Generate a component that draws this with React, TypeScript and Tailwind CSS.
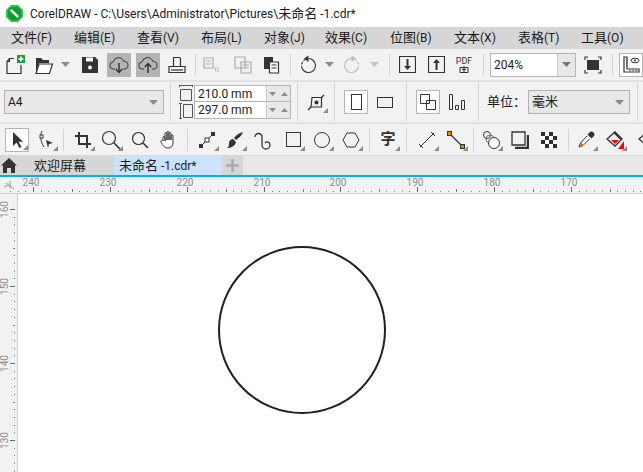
import type { ReactNode } from "react";

const FONT = "font-['Roboto','Noto_Sans_CJK_SC',sans-serif]";
const menus = [
  { cn: "文件", key: "(F)", w: "w-[63px]" },
  { cn: "编辑", key: "(E)", w: "w-[63px]" },
  { cn: "查看", key: "(V)", w: "w-[64px]" },
  { cn: "布局", key: "(L)", w: "w-[63px]" },
  { cn: "对象", key: "(J)", w: "w-[61px]" },
  { cn: "效果", key: "(C)", w: "w-[65px]" },
  { cn: "位图", key: "(B)", w: "w-[64px]" },
  { cn: "文本", key: "(X)", w: "w-[64px]" },
  { cn: "表格", key: "(T)", w: "w-[63px]" },
  { cn: "工具", key: "(O)", w: "w-[60px]" },
];

const Cn = ({ children }: { children: ReactNode }) => <span className="text-[13px]">{children}</span>;

const Ico = ({ children, w = 20, h = 20 }: { children: ReactNode; w?: number; h?: number }) => (
  <svg width={w} height={h} viewBox={`0 0 ${w} ${h}`} fill="none" stroke="#333" strokeWidth="1.2" className="block shrink-0">
    {children}
  </svg>
);

const Sep = ({ ml, h = "h-[22px]" }: { ml: string; h?: string }) => <div className={`w-px shrink-0 bg-[#d2d2d2] ${h} ${ml}`} />;

const Caret = ({ color = "#777" }: { color?: string }) => (
  <svg width="9" height="5" viewBox="0 0 9 5" className="block shrink-0">
    <path d="M0 0h9L4.500 5z" fill={color} />
  </svg>
);

// tool with the small flyout triangle in its lower right corner
const Tool = ({ ml, children, flyout = true, active = false }: { ml: string; children: ReactNode; flyout?: boolean; active?: boolean }) => (
  <div className={`relative flex h-[24px] w-[24px] shrink-0 items-center justify-center ${ml} ${active ? "border border-[#b5b5b5] bg-white" : ""}`}>
    {children}
    {flyout && (
      <svg width="5" height="5" viewBox="0 0 5 5" className="absolute bottom-px right-0">
        <path d="M5 0v5H0z" fill="#8a8a8a" />
      </svg>
    )}
  </div>
);

const Btn = ({ ml, children, on = false }: { ml: string; children: ReactNode; on?: boolean }) => (
  <div className={`flex h-[24px] w-[24px] shrink-0 items-center justify-center ${ml} ${on ? "bg-[#b4b4b4]" : ""}`}>{children}</div>
);

const Cloud = ({ up }: { up?: boolean }) => (
  <Ico>
    <path d="M6 14H4.500a3.500 3.500 0 0 1-.4-7 5.500 5.500 0 0 1 10.600-.6 3.800 3.800 0 0 1 .8 7.600H14" strokeWidth="1" />
    {up ? <path d="M10 18V9M6.800 12 10 8.500l3.200 3.500" strokeWidth="1.500" /> : <path d="M10 8v9M6.800 14l3.200 3.500 3.200-3.500" strokeWidth="1.500" />}
  </Ico>
);

const Spin = () => (
  <div className="flex h-full w-[24px] items-center justify-center gap-[5px] border-l border-[#c8c8c8] bg-[#e8e8e8]">
    <svg width="7" height="4" viewBox="0 0 7 4"><path d="M0 0h7L3.500 4z" fill="#8c8c8c" /></svg>
    <svg width="7" height="4" viewBox="0 0 7 4"><path d="M0 4h7L3.500 0z" fill="#8c8c8c" /></svg>
  </div>
);

const TitleBar = () => (
  <div className="flex h-[27px] items-center bg-white pl-[6px]">
    <svg width="17" height="17" viewBox="0 0 17 17" className="block shrink-0">
      <path d="M5 0h7l5 5v7l-5 5H5l-5-5V5z" fill="#2fc24a" />
      <path d="M5.500 2h6l3.500 3.500v6L11.500 15h-6L2 11.500v-6z" fill="#0f9a32" />
      <path d="M4.800 4.800l7.400 7.400" stroke="#f2f7ea" strokeWidth="2.600" />
    </svg>
    <span className="ml-[7px] whitespace-nowrap text-[12px] text-[#1a1a1a]">
      CorelDRAW - C:\Users\Administrator\Pictures\<Cn>未命名</Cn> -1.cdr*
    </span>
  </div>
);

const MenuBar = () => (
  <div className="flex h-[22px] items-center bg-[#d6d6d6] pl-[11px] text-[12px] text-[#1a1a1a]">
    {menus.map((m) => (
      <span key={m.cn} className={`${m.w} shrink-0 whitespace-nowrap`}>
        <Cn>{m.cn}</Cn>
        {m.key}
      </span>
    ))}
  </div>
);

const Row1 = () => (
  <div className="flex h-[31px] items-center overflow-hidden bg-[#f2f2f2]">
    <Btn ml="ml-[4px]">
      <Ico>
        <path d="M8 3.500H3.500L1 6.500v12h14V10" />
        <path d="M3.500 3.500v3H1" />
        <rect x="11" y="0" width="8" height="8" fill="#1c9a3e" stroke="none" />
        <path d="M15 1.500v5M12.500 4h5" stroke="#fff" strokeWidth="1.500" />
      </Ico>
    </Btn>
    <Btn ml="ml-[4px]">
      <Ico>
        <path d="M2 18V3h5l2 2h6v3H5z" fill="#333" stroke="none" />
        <path d="M2 18.500 5 9h13.500l-3 9.500z" fill="#fff" />
      </Ico>
    </Btn>
    <div className="flex w-[18px] shrink-0 justify-center"><Caret color="#8a8a8a" /></div>
    <Btn ml="ml-[4px]">
      <Ico>
        <path d="M2 2h13l3 3v13H2z" fill="#333" stroke="none" />
        <rect x="6" y="2.500" width="7" height="4" fill="#fff" stroke="none" />
        <circle cx="10" cy="12.500" r="2" fill="#fff" stroke="none" />
      </Ico>
    </Btn>
    <Btn ml="ml-[5px]" on><Cloud /></Btn>
    <Btn ml="ml-[5px]" on><Cloud up /></Btn>
    <Btn ml="ml-[5px]">
      <Ico>
        <path d="M6.500 11V2.500h6l1 1V11" />
        <path d="M2 11.500h16v6H2z" />
        <path d="M4 15h12" />
      </Ico>
    </Btn>
    <Sep ml="ml-[6px]" />
    <Btn ml="ml-[3px]">
      <Ico>
        <g stroke="#aaa">
          <path d="M3 3h9v10H3zM5 6h5M5 9h5" />
          <path d="M14 13h3v3h-3z" strokeDasharray="1.500 1" />
        </g>
      </Ico>
    </Btn>
    <Btn ml="ml-[8px]">
      <Ico>
        <g stroke="#aaa">
          <path d="M2 2h10v11H2zM8 7h10v11H8zM10 10h6M10 13h6" />
        </g>
      </Ico>
    </Btn>
    <Btn ml="ml-[4px]">
      <Ico>
        <path d="M3 2h9v12H3z" fill="#333" stroke="none" />
        <path d="M8.500 7h9v11h-9zM10.500 10h5M10.500 13h5" fill="#fff" />
      </Ico>
    </Btn>
    <Sep ml="ml-[7px]" />
    <Btn ml="ml-[5px]">
      <Ico>
        <path d="M10.500 3.500a7 7 0 1 1-7 7.500" strokeWidth="1.100" />
        <path d="M3.500 9.500 4.500 7M5.500 5.500 7 4.500" strokeWidth="1.100" />
        <path d="M10.500 .5 6 3.500l4.500 3.500z" fill="#333" stroke="none" />
      </Ico>
    </Btn>
    <div className="flex w-[18px] shrink-0 justify-center"><Caret color="#8a8a8a" /></div>
    <Btn ml="ml-[2px]">
      <Ico>
        <path d="M9.500 3.500a7 7 0 1 0 7 7.500" stroke="#bbb" strokeWidth="1.100" />
        <path d="M16.500 9.500 15.500 7M14.500 5.500 13 4.500" stroke="#bbb" strokeWidth="1.100" />
        <path d="M9.500 .5 14 3.500 9.500 7z" fill="#bbb" stroke="none" />
      </Ico>
    </Btn>
    <div className="ml-[1px] flex w-[18px] shrink-0 justify-center"><Caret color="#c4c4c4" /></div>
    <Sep ml="ml-[6px]" />
    <Btn ml="ml-[5px]">
      <Ico w={17} h={17}>
        <path d="M.5.5h16v16H.5z" />
        <path d="M8.500 3v8" strokeWidth="2" />
        <path d="M5 10h7l-3.500 4z" fill="#333" stroke="none" />
      </Ico>
    </Btn>
    <Btn ml="ml-[5px]">
      <Ico w={17} h={17}>
        <path d="M.5.5h16v16H.5z" />
        <path d="M8.500 6v8" strokeWidth="2" />
        <path d="M5 7h7L8.500 3z" fill="#333" stroke="none" />
      </Ico>
    </Btn>
    <div className="ml-[4px] flex w-[24px] shrink-0 flex-col items-center">
      <span className="text-[9px] leading-[10px] text-[#333]">PDF</span>
      <svg width="10" height="7" viewBox="0 0 10 7" fill="none" stroke="#333"><path d="M1 1.500h8v5H1zM5 0v6.500M3 3.500h4" /></svg>
    </div>
    <Sep ml="ml-[7px]" />
    <div className="ml-[6px] flex h-[24px] w-[86px] shrink-0 items-center border border-[#b5b5b5] bg-white pl-[3px] text-[12px] text-[#1a1a1a]">
      <span className="grow">204%</span>
      <div className="flex h-full w-[18px] items-center justify-center border-l border-[#c8c8c8] bg-[#e8e8e8]"><Caret color="#777" /></div>
    </div>
    <Btn ml="ml-[5px]">
      <Ico w={18} h={18}>
        <rect x="3" y="4" width="12" height="10" fill="#333" stroke="none" />
        <path d="M1 4V1h3M14 1h3v3M1 14v3h3M14 17h3v-3" />
      </Ico>
    </Btn>
    <Sep ml="ml-[7px]" />
    <div className="ml-[6px] flex h-[24px] w-[24px] shrink-0 items-center justify-center border border-[#b5b5b5] bg-white">
      <Ico>
        <path d="M3 2h3v12h12v3H3z" />
        <path d="M5 5h1M5 8h1M5 11h1M9 15v1M12 15v1M15 15v1" />
        <ellipse cx="14" cy="5.500" rx="4" ry="2.300" strokeWidth="1" />
        <circle cx="14" cy="5.500" r="1" fill="#333" stroke="none" />
      </Ico>
    </div>
  </div>
);

const Row2 = () => (
  <div className="flex h-[44px] items-center overflow-hidden border-y-2 border-[#e2e2e2] bg-[#f2f2f2]">
    <div className="ml-[4px] flex h-[24px] w-[160px] shrink-0 items-center justify-between border border-[#b0b0b0] bg-[#e8e8e8] pl-[3px] pr-[5px] text-[12px] text-[#1a1a1a]">
      <span>A4</span>
      <Caret color="#8a8a8a" />
    </div>
    <Sep ml="ml-[6px]" h="h-[38px]" />
    <div className="ml-[8px] flex w-[14px] shrink-0 flex-col gap-[2px]">
      <svg width="14" height="16" viewBox="0 0 14 16" fill="none" stroke="#555"><path d="M0 .5h14M.5 0v2M13.500 0v2M1.500 4.500h11v11h-11z" /></svg>
      <svg width="14" height="16" viewBox="0 0 14 16" fill="none" stroke="#555"><path d="M1.500 0v16M0 .5h3M0 15.500h3M4.500 1.500h9v13h-9z" /></svg>
    </div>
    <div className="ml-[1px] flex h-[34px] w-[97px] shrink-0 flex-col border border-[#b5b5b5] bg-white text-[12px] leading-none text-[#1a1a1a]">
      <div className="flex h-[16px] items-center justify-between border-b border-[#b5b5b5]"><span className="pl-[3px]">210.0 mm</span><Spin /></div>
      <div className="flex h-[16px] grow items-center justify-between"><span className="pl-[3px]">297.0 mm</span><Spin /></div>
    </div>
    <Sep ml="ml-[6px]" h="h-[38px]" />
    <Tool ml="ml-[6px]">
      <Ico w={18} h={18}>
        <path d="M5 4.500h9.500V14H4z" />
        <circle cx="9.500" cy="9.500" r="2" fill="#333" stroke="none" />
        <path d="M1 17l3-3M14.500 4.500 17 2" strokeWidth="1.400" />
      </Ico>
    </Tool>
    <Sep ml="ml-[6px]" h="h-[38px]" />
    <div className="ml-[9px] flex h-[24px] w-[24px] shrink-0 items-center justify-center border border-[#b5b5b5] bg-white">
      <div className="h-[16px] w-[11px] border border-[#333]" />
    </div>
    <div className="ml-[9px] flex h-[24px] w-[16px] shrink-0 items-center justify-center">
      <div className="h-[11px] w-[16px] shrink-0 border border-[#333]" />
    </div>
    <Sep ml="ml-[13px]" h="h-[38px]" />
    <div className="ml-[9px] flex h-[24px] w-[24px] shrink-0 items-center justify-center border border-[#b5b5b5] bg-white">
      <svg width="16" height="16" viewBox="0 0 16 16" fill="none" stroke="#333"><path d="M.5.5h9v9h-9zM6.500 6.500h9v9h-9z" fill="#fff" /></svg>
    </div>
    <div className="ml-[9px] flex h-[24px] w-[16px] shrink-0 items-center">
      <svg width="16" height="16" viewBox="0 0 16 16" fill="none" stroke="#333"><path d="M.5.5h3v15h-3zM6.500 11.500h3v4h-3zM12.500 6.500h3v9h-3z" /></svg>
    </div>
    <Sep ml="ml-[13px]" h="h-[38px]" />
    <span className="ml-[8px] w-[41px] shrink-0 whitespace-nowrap text-[13px] text-[#1a1a1a]">单位：</span>
    <div className="flex h-[24px] w-[102px] shrink-0 items-center justify-between border border-[#b0b0b0] bg-[#e8e8e8] pl-[3px] pr-[5px] text-[13px] text-[#1a1a1a]">
      <span>毫米</span>
      <Caret color="#8a8a8a" />
    </div>
    <Sep ml="ml-[7px]" h="h-[38px]" />
  </div>
);

const Row3 = () => (
  <div className="flex h-[31px] items-center overflow-hidden bg-[#f2f2f2]">
    <Tool ml="ml-[5px]" active>
      <Ico w={16} h={18}><path d="M4 1v14l3.500-3.500 3 5.500 2-1-3-5.300H14z" fill="#333" stroke="none" /></Ico>
    </Tool>
    <Tool ml="ml-[5px]">
      <Ico w={16} h={20}>
        <path d="M4 1C2 5 2 11 6 17" strokeWidth="1" />
        <rect x="2" y="5" width="3" height="3" fill="#fff" strokeWidth="1" />
        <path d="M8 10l7 3-4 1-1 4z" fill="#333" stroke="none" />
      </Ico>
    </Tool>
    <Sep ml="ml-[5px]" />
    <Tool ml="ml-[7px]">
      <Ico w={18} h={18}>
        <path d="M5 1v12h12M1 5h12v12" strokeWidth="2" />
      </Ico>
    </Tool>
    <Tool ml="ml-[4px]">
      <Ico><circle cx="8" cy="8" r="6.500" /><path d="M13 13l6 6" strokeWidth="1.600" /></Ico>
    </Tool>
    <Tool ml="ml-[5px]" flyout={false}>
      <Ico><circle cx="8.500" cy="8.500" r="6" /><path d="M13 13l5 5" strokeWidth="1.600" /></Ico>
    </Tool>
    <Tool ml="ml-[5px]" flyout={false}>
      <Ico>
        <path d="M4 11V7.500a1 1 0 0 1 2 0V11V3.500a1 1 0 0 1 2 0V10V2.500a1 1 0 0 1 2 0V10V3.500a1 1 0 0 1 2 0V10V6a1 1 0 0 1 2 0v7c0 3-2 5-5 5-3.500 0-4.500-2-7-6-.7-1.300.8-2.300 2-1z" fill="#fff" strokeWidth="1" />
      </Ico>
    </Tool>
    <Sep ml="ml-[6px]" />
    <Tool ml="ml-[7px]">
      <Ico w={18} h={18}>
        <path d="M3 15 15 3" strokeWidth="1" />
        <rect x="1" y="13" width="4" height="4" fill="#333" stroke="none" />
        <rect x="13" y="1" width="4" height="4" fill="#333" stroke="none" />
        <rect x="7" y="7" width="4" height="4" fill="#fff" strokeWidth="1" />
      </Ico>
    </Tool>
    <Tool ml="ml-[4px]">
      <Ico w={18} h={18}>
        <path d="M17 1c-1 3-4 6-7 8l-2-2c2-3 5-5 9-6z" fill="#333" stroke="none" />
        <path d="M7 8l3 3c-1 4-5 6-9 6 2-1 2-3 2-5 0-2 2-4 4-4z" fill="#333" stroke="none" />
      </Ico>
    </Tool>
    <Tool ml="ml-[4px]" flyout={false}>
      <Ico w={18} h={20}><path d="M1 7a3.500 3.500 0 0 1 7 0v8a4 4 0 0 0 8 0c0-3-3-4-5-2" strokeWidth="1.300" /></Ico>
    </Tool>
    <Tool ml="ml-[6px]">
      <div className="h-[15px] w-[15px] border border-[#333]" />
    </Tool>
    <Tool ml="ml-[5px]">
      <div className="h-[16px] w-[16px] rounded-full border border-[#333]" />
    </Tool>
    <Tool ml="ml-[5px]">
      <Ico w={18} h={16}><path d="M5 1h8l4 7-4 7H5L1 8z" strokeWidth="1" /></Ico>
    </Tool>
    <Sep ml="ml-[6px]" />
    <Tool ml="ml-[6px]">
      <span className="text-[15px] font-bold leading-none text-[#333]">字</span>
    </Tool>
    <Sep ml="ml-[6px]" />
    <Tool ml="ml-[8px]">
      <Ico w={18} h={18}><path d="M2 16 16 2M1 13l4 4M13 1l4 4" strokeWidth="1" /></Ico>
    </Tool>
    <Tool ml="ml-[5px]">
      <Ico w={18} h={18}>
        <path d="M3 3l12 12" strokeWidth="1.200" />
        <rect x="0.500" y="0.500" width="4" height="4" fill="#f57c00" stroke="#333" strokeWidth="1" />
        <rect x="13.500" y="13.500" width="4" height="4" fill="#f57c00" stroke="#333" strokeWidth="1" />
      </Ico>
    </Tool>
    <Sep ml="ml-[5px]" />
    <Tool ml="ml-[5px]">
      <Ico>
        <circle cx="6" cy="5" r="3.500" strokeWidth="1" />
        <circle cx="9" cy="9" r="4" strokeWidth="1" stroke="#777" />
        <circle cx="13" cy="13" r="5.500" fill="#fff" strokeWidth="1" />
      </Ico>
    </Tool>
    <Tool ml="ml-[5px]" flyout={false}>
      <Ico w={18} h={18}>
        <path d="M1 1h13v13H1z" strokeWidth="1.300" />
        <path d="M17 4v13H4" strokeWidth="2.400" />
      </Ico>
    </Tool>
    <Tool ml="ml-[5px]" flyout={false}>
      <svg width="16" height="16" viewBox="0 0 4 4" className="block">
        <rect width="4" height="4" fill="#2e2e2e" />
        <path d="M1 0h1v1H1zM3 0h1v1H3zM0 1h1v1H0zM2 1h1v1H2zM1 2h1v1H1zM3 2h1v1H3zM0 3h1v1H0zM2 3h1v1H2z" fill="#fff" />
      </svg>
    </Tool>
    <Sep ml="ml-[7px]" />
    <Tool ml="ml-[5px]">
      <Ico w={18} h={18}>
        <path d="M12.500 1.500a2.300 2.300 0 0 1 4 4l-2 2-4-4z" fill="#333" stroke="none" />
        <path d="M10 5 3.500 12 2 16l4-1.500L12.500 8" fill="#fff" strokeWidth="1" />
        <path d="M4.500 11.500 2 16l4.500-2z" fill="#e8751a" stroke="none" />
      </Ico>
    </Tool>
    <Tool ml="ml-[5px]">
      <Ico>
        <path d="M10 2l7 7-7 7-8-7z" strokeWidth="1.300" />
        <path d="M9 2l7 7" strokeWidth="2.400" />
        <path d="M6 10h8l-4 4z" fill="#f00" stroke="none" />
        <path d="M19 11v8h-6z" fill="#f00" stroke="none" />
      </Ico>
    </Tool>
    <Tool ml="ml-[8px]">
      <Ico><path d="M10 2l7 7-7 7-8-7z" strokeWidth="1.300" /><path d="M6 10h8l-4 4z" fill="#f00" stroke="none" /></Ico>
    </Tool>
  </div>
);

const TabBar = () => (
  <div className="flex h-[22px] border-y border-b-2 border-t-[#d6d6d6] border-b-[#00aeff] bg-[#e8e8e8] text-[12px] text-[#1a1a1a]">
    <div className="flex w-[114px] items-center bg-[#d6d6d6]">
      <svg width="16" height="15" viewBox="0 0 16 15" className="ml-[1px] block shrink-0">
        <path d="M8 0 0 7.500h2V15h4v-5h4v5h4V7.500h2z" fill="#333" />
      </svg>
      <span className="ml-[17px] whitespace-nowrap"><Cn>欢迎屏幕</Cn></span>
    </div>
    <div className="flex w-[108px] items-center bg-[#cce4fb] pl-[5px]">
      <span className="whitespace-nowrap"><Cn>未命名</Cn> -1.cdr*</span>
    </div>
    <div className="flex w-[21px] items-center justify-center bg-[#d6d6d6]">
      <svg width="13" height="13" viewBox="0 0 13 13"><path d="M6.500 0v13M0 6.500h13" stroke="#aaa" strokeWidth="2.500" /></svg>
    </div>
  </div>
);

const majorX = [33, 110, 187, 264, 340, 417, 494, 571];
const hLabels = ["240", "230", "220", "210", "200", "190", "180", "170"];

const TopRuler = () => (
  <svg width="643" height="17" viewBox="0 0 643 17" className="block bg-[#f2f2f2]">
    <path d="M0 16.500H643" stroke="#d0d0d0" />
    {majorX.map((x, i) => (
      <g key={x}>
        <text x={x - 2} y="9" textAnchor="middle" fontSize="10" fill="#8c8c8c">{hLabels[i]}</text>
        <rect x={x} y="10" width="1" height="5" fill="#666" />
        {[1, 2, 3, 4, 5, 6, 7, 8, 9].map((k) => (
          <rect key={k} x={Math.round(x + k * 7.7)} y={k === 5 ? 12 : 14} width="1" height={k === 5 ? 3 : 1} fill="#777" />
        ))}
      </g>
    ))}
    {[1, 2, 3].map((k) => (
      <rect key={k} x={Math.round(33 - k * 7.7)} y="14" width="1" height="1" fill="#777" />
    ))}
    <path d="M6 6l8 6M10 4v7M4 10l5-2" stroke="#9a9a9a" fill="none" />
  </svg>
);

const vLabels = [
  { y: 209, t: "160", top: "top-[7px]" },
  { y: 286, t: "150", top: "top-[84px]" },
  { y: 363, t: "140", top: "top-[161px]" },
  { y: 440, t: "130", top: "top-[238px]" },
];

const LeftRuler = () => (
  <div className="relative h-[278px] w-[18px] shrink-0 bg-[#f2f2f2]">
    <svg width="18" height="278" viewBox="0 194 18 278" className="block">
      <path d="M17.500 194V472" stroke="#d0d0d0" />
      {vLabels.map(({ y }) => (
        <g key={y}>
          <rect x="10" y={y} width="5" height="1" fill="#666" />
          {[1, 2, 3, 4, 5, 6, 7, 8, 9].map((k) => (
            <rect key={k} x={k === 5 ? 13 : 14} y={Math.round(y + k * 7.7)} width={k === 5 ? 2 : 1} height="1" fill="#777" />
          ))}
        </g>
      ))}
    </svg>
    {vLabels.map(({ t, top }) => (
      <span key={t} className={`absolute left-0 rotate-180 text-[10px] leading-[10px] text-[#8c8c8c] [writing-mode:vertical-rl] ${top}`}>{t}</span>
    ))}
  </div>
);

export default function App() {
  return (
    <div className={`h-[472px] w-[643px] overflow-hidden bg-white ${FONT}`}>
      <TitleBar />
      <MenuBar />
      <Row1 />
      <Row2 />
      <Row3 />
      <TabBar />
      <TopRuler />
      <div className="flex">
        <LeftRuler />
        <div className="relative grow bg-white">
          <svg width="170" height="170" viewBox="0 0 170 170" className="absolute left-[199px] top-[51px]">
            <circle cx="85" cy="85" r="83" fill="none" stroke="#231f20" strokeWidth="2" />
          </svg>
        </div>
      </div>
    </div>
  );
}
